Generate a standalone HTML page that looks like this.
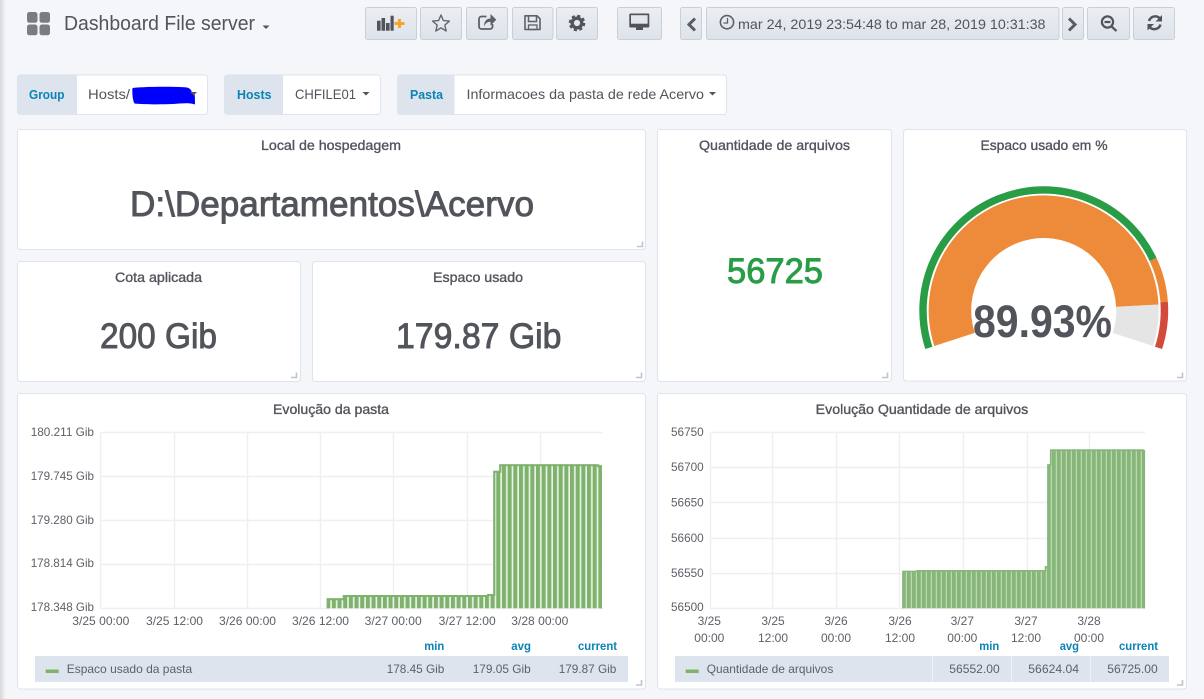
<!DOCTYPE html>
<html><head><meta charset="utf-8"><title>Dashboard File server</title>
<style>
html,body{margin:0;padding:0;background:#f5f6f9;width:1204px;height:699px;overflow:hidden}
svg{display:block;position:absolute;left:0;top:0}
text{font-family:"Liberation Sans",sans-serif;fill:#52545c}
.t{font-size:14px;stroke:#52545c;stroke-width:.35}
.v{font-size:14px}
.l{font-size:13px;font-weight:bold;fill:#0a84b4}
.a{font-size:12px;fill:#5e6068}
.h{font-size:12px;font-weight:bold;fill:#0a84b4}
.big{stroke:#52545c;stroke-width:.9}
.p{fill:#fff;stroke:#dde4ed;stroke-width:1}
.b{fill:url(#btn);stroke:#c7d0d9;stroke-width:1}
.g{stroke:#eeeff1;stroke-width:1.4;fill:none}
.c{fill:#dde4ed}
.r{fill:none;stroke:#c0c4cc;stroke-width:1.6}
</style></head><body>
<svg width="1204" height="699" viewBox="0 0 1204 699" xmlns="http://www.w3.org/2000/svg">
<defs>
<linearGradient id="btn" x1="0" y1="0" x2="0" y2="1"><stop offset="0" stop-color="#ebeef2"/><stop offset="1" stop-color="#dde3ea"/></linearGradient>
<linearGradient id="sh" x1="0" y1="0" x2="1" y2="0"><stop offset="0" stop-color="#d6d7db"/><stop offset="1" stop-color="#f5f6f9"/></linearGradient>
<pattern id="p1" patternUnits="userSpaceOnUse" x="326.2" y="0" width="5.67" height="10"><rect width="5.67" height="10" fill="#e9f2e6"/><rect width="4" height="10" fill="#7eb26d"/></pattern>
<pattern id="p2" patternUnits="userSpaceOnUse" x="902" y="0" width="5" height="10"><rect width="5" height="10" fill="#86b678"/><rect x="3.7" width="1.3" height="10" fill="#bcd8b3"/></pattern>
</defs>
<rect x="0" y="0" width="6" height="699" fill="url(#sh)"/>

<!-- header -->
<g fill="#7b7c82"><rect x="27" y="12" width="10.5" height="10.8" rx="2.5"/><rect x="39.5" y="12" width="10.5" height="10.8" rx="2.5"/><rect x="27" y="24.5" width="10.5" height="10.8" rx="2.5"/><rect x="39.5" y="24.5" width="10.5" height="10.8" rx="2.5"/></g>
<text x="64" y="30" font-size="20" textLength="191" lengthAdjust="spacingAndGlyphs">Dashboard File server</text>
<path d="M262.5 25.5h7l-3.5 3.5z" fill="#52545c"/>

<rect class="b" x="365.5" y="7.5" width="51" height="32" rx="2"/>
<rect class="b" x="420.5" y="7.5" width="41" height="32" rx="2"/>
<rect class="b" x="466.5" y="7.5" width="41" height="32" rx="2"/>
<rect class="b" x="512.5" y="7.5" width="40.5" height="32" rx="2"/>
<rect class="b" x="556.5" y="7.5" width="41" height="32" rx="2"/>
<rect class="b" x="617.5" y="7.5" width="44" height="32" rx="2"/>
<rect class="b" x="680.5" y="7.5" width="21" height="32" rx="2"/>
<rect class="b" x="706.5" y="7.5" width="352.5" height="32" rx="2"/>
<rect class="b" x="1062.5" y="7.5" width="21" height="32" rx="2"/>
<rect class="b" x="1087.5" y="7.5" width="42" height="32" rx="2"/>
<rect class="b" x="1133.5" y="7.5" width="41" height="32" rx="2"/>

<!-- add panel -->
<g fill="#52545c"><rect x="377" y="20.7" width="3.6" height="10"/><rect x="381.5" y="18" width="3.6" height="12.7"/><rect x="386" y="23" width="3.6" height="7.7"/><rect x="390.5" y="15.7" width="3.2" height="15"/></g>
<path d="M399.5 19v9M394.5 23.5h10" stroke="#f5a623" stroke-width="3" fill="none"/>
<!-- star -->
<path d="M441 15l2.4 5.6 6 .5-4.600 4 1.400 5.900-5.200-3.100-5.200 3.100 1.400-5.900-4.600-4 6-.5z" fill="none" stroke="#64666e" stroke-width="1.400" stroke-linejoin="round"/>
<!-- share -->
<path d="M486.500 16.500h-5a2.500 2.500 0 0 0-2.500 2.500v7.500a2.500 2.500 0 0 0 2.500 2.500h8.500a2.500 2.500 0 0 0 2.500-2.500v-2.500" fill="none" stroke="#5e6068" stroke-width="1.800"/>
<path d="M484 27c0-6 2.500-8.500 6.500-8.500v-4.500l5.800 5.800-5.800 5.800v-3.800c-3 0-5 1.500-6.500 4.700z" fill="#5e6068"/>
<!-- save -->
<path d="M525 15.800h12l3 3v10.700h-15z" fill="none" stroke="#5e6068" stroke-width="1.600" stroke-linejoin="round"/>
<path d="M528.500 16v5.500h8v-5.500" fill="none" stroke="#5e6068" stroke-width="1.500"/>
<rect x="528.500" y="25" width="8.500" height="4.500" fill="none" stroke="#5e6068" stroke-width="1.300"/>
<!-- gear -->
<circle cx="577" cy="23" r="4.800" fill="none" stroke="#52545c" stroke-width="3.400"/>
<circle cx="577" cy="23" r="7.100" fill="none" stroke="#52545c" stroke-width="2.400" stroke-dasharray="3.100 2.480"/>
<!-- monitor -->
<path d="M630.300 13.500h18a1 1 0 0 1 1 1v12a1 1 0 0 1-1 1h-18a1 1 0 0 1-1-1v-12a1 1 0 0 1 1-1z" fill="#52545c"/>
<rect x="631" y="15.200" width="16.600" height="8.500" fill="#e3e7ec"/>
<rect x="636" y="27" width="7" height="3" fill="#52545c"/>
<!-- chevrons -->
<path d="M695 18.500l-6 6 6 6" fill="none" stroke="#5a5c64" stroke-width="3"/>
<path d="M1069 18.500l6 6-6 6" fill="none" stroke="#5a5c64" stroke-width="3"/>
<!-- clock -->
<circle cx="727" cy="22.200" r="6.600" fill="none" stroke="#5e6068" stroke-width="1.600"/>
<path d="M727.500 18v5h-4" fill="none" stroke="#5e6068" stroke-width="1.300"/>
<text class="v" x="738" y="29" textLength="307.500" lengthAdjust="spacingAndGlyphs">mar 24, 2019 23:54:48 to mar 28, 2019 10:31:38</text>
<!-- zoom -->
<circle cx="1107.500" cy="22" r="5.600" fill="none" stroke="#52545c" stroke-width="2.200"/>
<path d="M1104.500 22h6M1111.500 26.500l5 4.500" fill="none" stroke="#52545c" stroke-width="2.200"/>
<!-- refresh -->
<path d="M1149 21a6.500 6.500 0 0 1 10.800-2.800" fill="none" stroke="#52545c" stroke-width="2.400"/>
<path d="M1162 15v6.500h-6.500z" fill="#52545c"/>
<path d="M1160.500 24.500a6.500 6.500 0 0 1-10.800 2.800" fill="none" stroke="#52545c" stroke-width="2.400"/>
<path d="M1147.500 30.500v-6.500h6.500z" fill="#52545c"/>

<!-- variables -->
<rect x="17.500" y="75" width="190" height="39.500" rx="3" class="p"/>
<path d="M20 75h57v39.500h-57a3 3 0 0 1-3-3v-33.500a3 3 0 0 1 3-3z" class="c"/>
<text class="l" x="29" y="99" textLength="35.500" lengthAdjust="spacingAndGlyphs">Group</text>
<text class="v" x="88" y="99" textLength="42" lengthAdjust="spacingAndGlyphs">Hosts/</text>
<path d="M132.500 88c15-1.500 41-1.500 54.500-.500 3 1 4 2 4.500 4l3 2c.5 3 .5 8 .5 11-6-2-14-1-22-.500-12 .5-29 .5-38.500-.500-2-3-2.500-12-2-15.500z" fill="#0000ff"/>
<path d="M190 92h7l-3.500 3.500z" fill="#52545c"/>

<rect x="224.500" y="75" width="156" height="39.500" rx="3" class="p"/>
<path d="M227 75h56v39.500h-56a3 3 0 0 1-3-3v-33.500a3 3 0 0 1 3-3z" class="c"/>
<text class="l" x="237" y="99" textLength="34.500" lengthAdjust="spacingAndGlyphs">Hosts</text>
<text class="v" x="295" y="99" textLength="61" lengthAdjust="spacingAndGlyphs">CHFILE01</text>
<path d="M362.500 92h7l-3.500 3.500z" fill="#52545c"/>

<rect x="397.500" y="75" width="329" height="39.500" rx="3" class="p"/>
<path d="M400 75h54.500v39.500h-54.500a3 3 0 0 1-3-3v-33.500a3 3 0 0 1 3-3z" class="c"/>
<text class="l" x="410" y="99" textLength="33" lengthAdjust="spacingAndGlyphs">Pasta</text>
<text class="v" x="466.500" y="99" textLength="237.500" lengthAdjust="spacingAndGlyphs">Informacoes da pasta de rede Acervo</text>
<path d="M709 92h7l-3.500 3.500z" fill="#52545c"/>

<!-- panels -->
<rect class="p" x="17.500" y="129.500" width="628" height="120" rx="3"/>
<rect class="p" x="17.500" y="261.500" width="283" height="120" rx="3"/>
<rect class="p" x="312.500" y="261.500" width="333" height="120" rx="3"/>
<rect class="p" x="657.500" y="129.500" width="234" height="252" rx="3"/>
<rect class="p" x="903.500" y="129.500" width="283" height="251.500" rx="3"/>
<rect class="p" x="17.500" y="393.500" width="628" height="295.500" rx="3"/>
<rect class="p" x="657.500" y="393.500" width="529" height="295.500" rx="3"/>

<path class="r" d="M637 246.500h5.500v-5"/>
<path class="r" d="M291 377.500h5.500v-5"/>
<path class="r" d="M636 377.500h5.500v-5"/>
<path class="r" d="M882 377.500h5.500v-5"/>
<path class="r" d="M1177 377.500h5.500v-5"/>
<path class="r" d="M636 685h5.500v-5"/>
<path class="r" d="M1177 685h5.500v-5"/>

<text class="t" x="261" y="150" textLength="140" lengthAdjust="spacingAndGlyphs">Local de hospedagem</text>
<text class="t" x="699" y="150" textLength="151" lengthAdjust="spacingAndGlyphs">Quantidade de arquivos</text>
<text class="t" x="980.500" y="150" textLength="127" lengthAdjust="spacingAndGlyphs">Espaco usado em %</text>
<text class="t" x="115" y="282" textLength="87" lengthAdjust="spacingAndGlyphs">Cota aplicada</text>
<text class="t" x="433" y="282" textLength="90" lengthAdjust="spacingAndGlyphs">Espaco usado</text>
<text class="t" x="273" y="414" textLength="116" lengthAdjust="spacingAndGlyphs">Evolução da pasta</text>
<text class="t" x="815.700" y="414" textLength="212.500" lengthAdjust="spacingAndGlyphs">Evolução Quantidade de arquivos</text>

<text class="big" x="130" y="216" font-size="35.500" textLength="404" lengthAdjust="spacingAndGlyphs">D:\Departamentos\Acervo</text>
<text class="big" x="100" y="348" font-size="35" textLength="117" lengthAdjust="spacingAndGlyphs">200 Gib</text>
<text class="big" x="396" y="348" font-size="35" textLength="165.500" lengthAdjust="spacingAndGlyphs">179.87 Gib</text>
<text x="727" y="283" font-size="35" textLength="96" lengthAdjust="spacingAndGlyphs" style="fill:#299c46;stroke:#299c46;stroke-width:.9">56725</text>

<!-- gauge -->
<path d="M925.300 349A124.500 124.500 0 0 1 1156.500 257.900L1149.700 261.100A117 117 0 0 0 932.400 346.700Z" fill="#299c46"/>
<path d="M1156.500 257.900A124.500 124.500 0 0 1 1167.900 301.800L1160.400 302.300A117 117 0 0 0 1149.700 261.100Z" fill="#ed8128" fill-opacity=".95"/>
<path d="M1167.900 301.800A124.500 124.500 0 0 1 1162.100 349L1155 346.700A117 117 0 0 0 1160.400 302.300Z" fill="#d44a3a"/>
<path d="M1158.500 304.500A115 115 0 0 1 1153 346L1112.700 332.900A72.500 72.500 0 0 0 1116.100 306.700Z" fill="#e5e5e5"/>
<path d="M934.300 346A115 115 0 1 1 1158.500 304.500L1116.100 306.700A72.500 72.500 0 1 0 974.750 332.900Z" fill="#ed8b3a"/>
<text x="973" y="337" font-size="45" font-weight="bold" textLength="139" lengthAdjust="spacingAndGlyphs">89.93%</text>

<!-- chart 1 -->
<path class="g" d="M100.500 432.500H603M100.500 476.500H603M100.500 520.500H603M100.500 564.500H603M100.500 608.500H603M100.500 432.500V608.500M174.500 432.500V608.500M247.500 432.500V608.500M320.500 432.500V608.500M393.500 432.500V608.500M467.500 432.500V608.500M540.500 432.500V608.500"/>
<path d="M326.700 608.300V598.300H342.700V595H488V594H493.300V470.700H499.300V464.300H598.300V465.300H602V608.300Z" fill="url(#p1)"/>
<path d="M327.700 608.300V599.300H343.700V596H488V595H494.300V471.700H500.300V465.300H598.300V466.300H601V608.300" fill="none" stroke="#7eb26d" stroke-width="2"/>
<text class="a" x="30.700" y="436" textLength="63.300" lengthAdjust="spacingAndGlyphs">180.211 Gib</text>
<text class="a" x="30.700" y="480" textLength="63.300" lengthAdjust="spacingAndGlyphs">179.745 Gib</text>
<text class="a" x="30.700" y="524" textLength="63.300" lengthAdjust="spacingAndGlyphs">179.280 Gib</text>
<text class="a" x="30.700" y="567" textLength="63.300" lengthAdjust="spacingAndGlyphs">178.814 Gib</text>
<text class="a" x="30.700" y="611" textLength="63.300" lengthAdjust="spacingAndGlyphs">178.348 Gib</text>
<text class="a" x="72.300" y="625" textLength="57" lengthAdjust="spacingAndGlyphs">3/25 00:00</text>
<text class="a" x="146" y="625" textLength="57" lengthAdjust="spacingAndGlyphs">3/25 12:00</text>
<text class="a" x="219" y="625" textLength="57" lengthAdjust="spacingAndGlyphs">3/26 00:00</text>
<text class="a" x="292" y="625" textLength="57" lengthAdjust="spacingAndGlyphs">3/26 12:00</text>
<text class="a" x="364.700" y="625" textLength="57" lengthAdjust="spacingAndGlyphs">3/27 00:00</text>
<text class="a" x="438.700" y="625" textLength="57" lengthAdjust="spacingAndGlyphs">3/27 12:00</text>
<text class="a" x="511.300" y="625" textLength="57" lengthAdjust="spacingAndGlyphs">3/28 00:00</text>

<rect class="c" x="35" y="656" width="593" height="26"/>
<rect x="45.700" y="669.500" width="13" height="3.500" fill="#7eb26d"/>
<text class="a" x="66.700" y="673" textLength="125.500" lengthAdjust="spacingAndGlyphs">Espaco usado da pasta</text>
<text class="h" x="424.300" y="650" textLength="20" lengthAdjust="spacingAndGlyphs">min</text>
<text class="h" x="511.300" y="650" textLength="19.700" lengthAdjust="spacingAndGlyphs">avg</text>
<text class="h" x="578" y="650" textLength="39" lengthAdjust="spacingAndGlyphs">current</text>
<text class="a" x="386.700" y="673" textLength="57.600" lengthAdjust="spacingAndGlyphs">178.45 Gib</text>
<text class="a" x="472.700" y="673" textLength="58" lengthAdjust="spacingAndGlyphs">179.05 Gib</text>
<text class="a" x="558.700" y="673" textLength="57.600" lengthAdjust="spacingAndGlyphs">179.87 Gib</text>

<!-- chart 2 -->
<path class="g" d="M710.500 432.500H1145M710.500 467.500H1145M710.500 502.500H1145M710.500 538.500H1145M710.500 573.500H1145M710.500 608.500H1145M710.500 432.500V608.500M772.500 432.500V608.500M836.500 432.500V608.500M899.500 432.500V608.500M963.500 432.500V608.500M1027.500 432.500V608.500M1089.500 432.500V608.500"/>
<path d="M902.300 608.300V570.700H916.700V570H1045V566H1047.300V464.300H1050V449.300H1143.300V450H1145V608.300Z" fill="url(#p2)"/>
<path d="M903 608.300V571.500H916.700V571H1045.500V567H1048V465H1050.700V450.300H1143.300V451H1144.300V608.300" fill="none" stroke="#86b678" stroke-width="1.600"/>
<text class="a" x="671" y="436" textLength="32.700" lengthAdjust="spacingAndGlyphs">56750</text>
<text class="a" x="671" y="471" textLength="32.700" lengthAdjust="spacingAndGlyphs">56700</text>
<text class="a" x="671" y="506.500" textLength="32.700" lengthAdjust="spacingAndGlyphs">56650</text>
<text class="a" x="671" y="542" textLength="32.700" lengthAdjust="spacingAndGlyphs">56600</text>
<text class="a" x="671" y="577" textLength="32.700" lengthAdjust="spacingAndGlyphs">56550</text>
<text class="a" x="671" y="611" textLength="32.700" lengthAdjust="spacingAndGlyphs">56500</text>

<g text-anchor="middle">
<text class="a" x="709.300" y="625">3/25</text><text class="a" x="709.300" y="642">00:00</text>
<text class="a" x="773" y="625">3/25</text><text class="a" x="773" y="642">12:00</text>
<text class="a" x="836" y="625">3/26</text><text class="a" x="836" y="642">00:00</text>
<text class="a" x="900" y="625">3/26</text><text class="a" x="900" y="642">12:00</text>
<text class="a" x="962.300" y="625">3/27</text><text class="a" x="962.300" y="642">00:00</text>
<text class="a" x="1026" y="625">3/27</text><text class="a" x="1026" y="642">12:00</text>
<text class="a" x="1089" y="625">3/28</text><text class="a" x="1089" y="642">00:00</text>
</g>

<rect class="c" x="675" y="656" width="494" height="26"/>
<path d="M932.500 656V682M1011.500 656V682M1090.500 656V682" stroke="#eef1f5" stroke-width="1"/>
<rect x="685.700" y="669.500" width="13" height="3.500" fill="#7eb26d"/>
<text class="a" x="706.700" y="673" textLength="126.600" lengthAdjust="spacingAndGlyphs">Quantidade de arquivos</text>
<text class="h" x="979.300" y="650" textLength="20" lengthAdjust="spacingAndGlyphs">min</text>
<text class="h" x="1059.700" y="650" textLength="19.300" lengthAdjust="spacingAndGlyphs">avg</text>
<text class="h" x="1119" y="650" textLength="39" lengthAdjust="spacingAndGlyphs">current</text>
<text class="a" x="949.300" y="673" textLength="50.400" lengthAdjust="spacingAndGlyphs">56552.00</text>
<text class="a" x="1028.300" y="673" textLength="50.700" lengthAdjust="spacingAndGlyphs">56624.04</text>
<text class="a" x="1107.300" y="673" textLength="50.400" lengthAdjust="spacingAndGlyphs">56725.00</text>
</svg>
</body></html>
